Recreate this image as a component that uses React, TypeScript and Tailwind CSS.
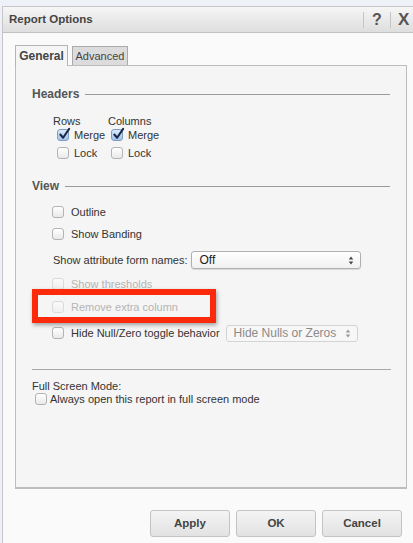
import type { ReactNode } from "react";

const font = { fontFamily: '"Liberation Sans", Arial, sans-serif' };

interface BoxProps {
  checked?: boolean;
  disabled?: boolean;
}

function CheckBox({ checked = false, disabled = false }: BoxProps) {
  if (checked) {
    return (
      <span className="relative inline-block h-[12px] w-[12px] shrink-0 rounded-[3px] border border-[#7d9cc4] bg-gradient-to-b from-[#dbeafb] to-[#9fc2ea]">
        <svg viewBox="0 0 14 14" className="absolute left-[0px] top-[-3px] h-[14px] w-[13px]">
          <path d="M2.5 7.5 L5.5 11 L12 1.5" fill="none" stroke="#1b2847" strokeWidth="2.2" strokeLinecap="round" strokeLinejoin="round" />
        </svg>
      </span>
    );
  }
  return (
    <span
      className={`inline-block h-[12px] w-[12px] shrink-0 rounded-[3px] border bg-gradient-to-b ${
        disabled ? "border-[#dadada] from-[#fafafa] to-[#f0f0f0]" : "border-[#b3b3b3] from-white to-[#e9e9e9]"
      }`}
    />
  );
}

function Option({ label, checked, disabled, children }: { label: string; checked?: boolean; disabled?: boolean; children?: ReactNode }) {
  return (
    <div className="flex h-[16px] items-center pl-[20px]">
      <CheckBox checked={checked} disabled={disabled} />
      <span className={`ml-[7px] text-[11px] ${disabled ? "text-[#b4b4b4]" : "text-[#333]"}`}>{label}</span>
      {children}
    </div>
  );
}

function Section({ title }: { title: string }) {
  return (
    <div className="flex h-[16px] items-center">
      <span className="text-[12px] font-bold text-[#555]">{title}</span>
      <span className="ml-[6px] mr-[1px] h-px flex-1 bg-[#9a9a9a]" />
    </div>
  );
}

function Spinner({ color }: { color: string }) {
  return (
    <svg viewBox="0 0 6 10" className="h-[9px] w-[6px]">
      <path d="M3 0.5 L5.5 4 L0.5 4 Z M3 9.5 L5.5 6 L0.5 6 Z" fill={color} />
    </svg>
  );
}

function Button({ label }: { label: string }) {
  return (
    <button
      type="button"
      className="h-[27px] w-[80px] rounded-[3px] border border-[#c3c3c3] bg-gradient-to-b from-[#f4f4f4] to-[#e2e2e2] text-[11.5px] font-bold text-[#444]"
    >
      {label}
    </button>
  );
}

export default function App() {
  return (
    <div className="h-[543px] w-[413px] overflow-hidden bg-[#eef1f7]" style={font}>
      <div className="ml-[2px] mt-[6px] flex h-[537px] flex-col border-l border-t border-[#c6c6c6] bg-[#fafafa]">
        {/* title bar */}
        <div className="flex h-[26px] items-center border-b border-[#c2c2c2] bg-gradient-to-b from-[#f6f6f6] to-[#dedede] pl-[6px]">
          <span className="text-[11.5px] font-bold text-[#444]">Report Options</span>
          <div className="ml-auto flex h-full items-center">
            <span className="h-[16px] w-px bg-[#c4c4c4]" />
            <span className="w-[26px] text-center text-[16px] font-bold text-[#555]">?</span>
            <span className="h-[16px] w-px bg-[#c4c4c4]" />
            <span className="w-[22px] pl-[7px] text-[17px] font-bold text-[#555]">X</span>
          </div>
        </div>

        <div className="pl-[12px] pr-[6px] pt-[12px]">
          {/* tabs */}
          <div className="flex h-[20px] items-end">
            <div className="relative z-10 -mb-px flex h-[21px] w-[53px] items-center justify-center border border-b-0 border-[#b5b5b5] bg-[#f5f5f5] text-[12px] font-bold text-[#444]">
              General
            </div>
            <div className="ml-[4px] flex h-[19px] w-[56px] items-center justify-center border border-b-0 border-[#aaa] bg-[#dcdcdc] text-[11px] text-[#444]">
              Advanced
            </div>
          </div>

          {/* tab panel */}
          <div className="h-[424px] w-[392px] border border-b-2 border-[#bdbdbd] bg-[#f5f5f5] pl-[16px] pr-[15px] pt-[20px]">
            <Section title="Headers" />
            <div className="mt-[12px] flex pl-[21px]">
              <div className="w-[55px]">
                <div className="flex h-[14px] items-center text-[11px] text-[#333]">Rows</div>
                <div className="flex h-[14px] items-center pl-[4px]">
                  <CheckBox checked />
                  <span className="ml-[5px] text-[11px] text-[#333]">Merge</span>
                </div>
                <div className="mt-[4px] flex h-[14px] items-center pl-[4px]">
                  <CheckBox />
                  <span className="ml-[5px] text-[11px] text-[#333]">Lock</span>
                </div>
              </div>
              <div>
                <div className="flex h-[14px] items-center text-[11px] text-[#333]">Columns</div>
                <div className="flex h-[14px] items-center pl-[3px]">
                  <CheckBox checked />
                  <span className="ml-[5px] text-[11px] text-[#333]">Merge</span>
                </div>
                <div className="mt-[4px] flex h-[14px] items-center pl-[3px]">
                  <CheckBox />
                  <span className="ml-[5px] text-[11px] text-[#333]">Lock</span>
                </div>
              </div>
            </div>

            <div className="mt-[18px]">
              <Section title="View" />
            </div>
            <div className="mt-[10px]">
              <Option label="Outline" />
            </div>
            <div className="mt-[6px]">
              <Option label="Show Banding" />
            </div>
            <div className="mt-[9px] flex h-[18px] items-center pl-[21px]">
              <span className="text-[11px] text-[#333]">Show attribute form names:</span>
              <div className="ml-[3px] flex h-[18px] w-[170px] items-center justify-between rounded-[3px] border border-[#b0b0b0] bg-gradient-to-b from-white to-[#f1f1f1] pl-[8px] pr-[6px] shadow-[0_1px_1px_rgba(0,0,0,0.12)]">
                <span className="text-[12px] text-[#222]">Off</span>
                <Spinner color="#444" />
              </div>
            </div>
            <div className="mt-[7px]">
              <Option label="Show thresholds" disabled />
            </div>
            <div className="relative mt-[7px]">
              <Option label="Remove extra column" disabled />
              <div className="absolute left-0 top-[-10px] h-[34px] w-[184px] border-[6px] border-[#fa2a0a] shadow-[1px_2px_4px_rgba(0,0,0,0.35)]" />
            </div>
            <div className="mt-[9px] flex h-[18px] items-center">
              <Option label="Hide Null/Zero toggle behavior" />
              <div className="ml-[6px] flex h-[17px] w-[132px] items-center justify-between rounded-[3px] border border-[#d4d4d4] bg-[#f7f7f7] pl-[7px] pr-[6px]">
                <span className="text-[12px] text-[#8a8a8a]">Hide Nulls or Zeros</span>
                <Spinner color="#999" />
              </div>
            </div>

            <div className="mt-[27px] h-px bg-[#a8a8a8]" />
            <div className="mt-[10px] flex h-[12px] items-center text-[11px] text-[#333]">Full Screen Mode:</div>
            <div className="flex h-[14px] items-center pl-[3px]">
              <CheckBox />
              <span className="ml-[3px] text-[11px] text-[#333]">Always open this report in full screen mode</span>
            </div>
          </div>

          {/* footer buttons */}
          <div className="mt-[21px] flex justify-end gap-[6px] pr-[5px]">
            <Button label="Apply" />
            <Button label="OK" />
            <Button label="Cancel" />
          </div>
        </div>
      </div>
    </div>
  );
}
